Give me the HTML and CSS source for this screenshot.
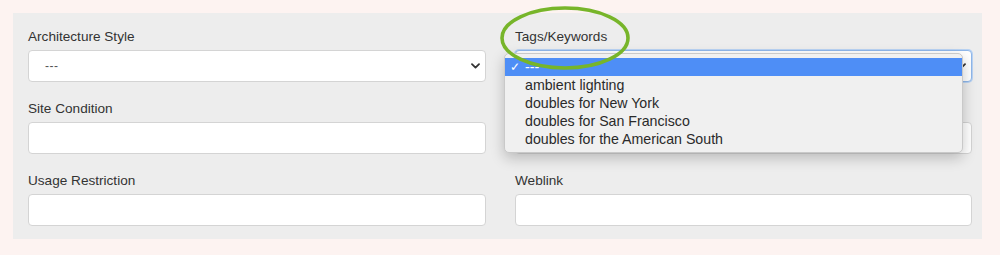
FILE: index.html
```html
<!DOCTYPE html>
<html>
<head>
<meta charset="utf-8">
<link rel="stylesheet" href="styles.css">
</head>
<body>
<div class="panel">
  <div class="field">
    <label class="label">Architecture Style</label>
    <div class="control select"><span class="value">---</span>
      <svg class="chev" width="9" height="6" viewBox="0 0 9 6"><path d="M1 1.2 L4.5 4.6 L8 1.2" fill="none" stroke="#333" stroke-width="1.8" stroke-linecap="round" stroke-linejoin="round"/></svg>
    </div>
  </div>
  <div class="field tags">
    <label class="label">Tags/Keywords</label>
    <div class="control select focus"><span class="value hidden"></span>
      <svg class="chev" width="9" height="6" viewBox="0 0 9 6"><path d="M1 1.2 L4.5 4.6 L8 1.2" fill="none" stroke="#333" stroke-width="1.8" stroke-linecap="round" stroke-linejoin="round"/></svg>
    </div>
    <ul class="menu">
      <li class="opt selected"><span class="check">✓</span>---</li>
      <li class="opt">ambient lighting</li>
      <li class="opt">doubles for New York</li>
      <li class="opt">doubles for San Francisco</li>
      <li class="opt">doubles for the American South</li>
    </ul>
    <svg class="ring" width="136" height="68" viewBox="0 0 136 68"><ellipse cx="68" cy="34" rx="63" ry="30" fill="none" stroke="#77b52a" stroke-width="3.6"/></svg>
  </div>
  <div class="field">
    <label class="label">Site Condition</label>
    <div class="control"></div>
  </div>
  <div class="field">
    <label class="label">&nbsp;</label>
    <div class="control"></div>
  </div>
  <div class="field">
    <label class="label">Usage Restriction</label>
    <div class="control"></div>
  </div>
  <div class="field">
    <label class="label">Weblink</label>
    <div class="control"></div>
  </div>
</div>
</body>
</html>
```

FILE: styles.css
```css
html, body {
  margin: 0;
  padding: 0;
  background: #fdf3f1;
  font-family: "Liberation Sans", Arial, sans-serif;
  font-size: 13.6px;
  color: #333;
}
.panel {
  margin: 13px 0 0 13px;
  width: 969px;
  height: 226px;
  box-sizing: border-box;
  background: #ededed;
  padding: 15px 10px 0 15px;
  display: grid;
  grid-template-columns: 458px 457px;
  column-gap: 29px;
  row-gap: 18px;
  align-content: start;
}
.field {
  display: flex;
  flex-direction: column;
  gap: 4px;
}
.tags {
  position: relative;
}
.label {
  display: block;
  height: 18px;
  line-height: 18px;
  color: #333;
}
.control {
  height: 32px;
  box-sizing: border-box;
  background: #fff;
  border: 1px solid #d4d4d4;
  border-radius: 4px;
}
.select {
  display: flex;
  align-items: center;
  justify-content: space-between;
  padding: 0 5px 0 16px;
}
.select .value {
  color: #555;
  font-size: 12px;
  letter-spacing: 0.5px;
}
.focus {
  border-color: #8fb7ea;
  box-shadow: 0 0 0 1px #b9d3f3;
}
.menu {
  position: absolute;
  left: -11px;
  top: 25px;
  width: 459px;
  margin: 0;
  padding: 4px 0 4px 0;
  list-style: none;
  background: #f0f0f0;
  border: 1px solid #c9c9c9;
  border-radius: 5px;
  box-shadow: 0 5px 14px rgba(0, 0, 0, 0.22);
  box-sizing: border-box;
  font-size: 14.2px;
}
.opt {
  height: 18px;
  line-height: 18px;
  padding-left: 20px;
  color: #2a2a2a;
  position: relative;
}
.opt.selected {
  background: #4e8ef6;
  color: #fff;
}
.check {
  position: absolute;
  left: 5px;
  top: 0;
  font-size: 12px;
}
.ring {
  position: absolute;
  left: -18px;
  top: -24px;
}
```
